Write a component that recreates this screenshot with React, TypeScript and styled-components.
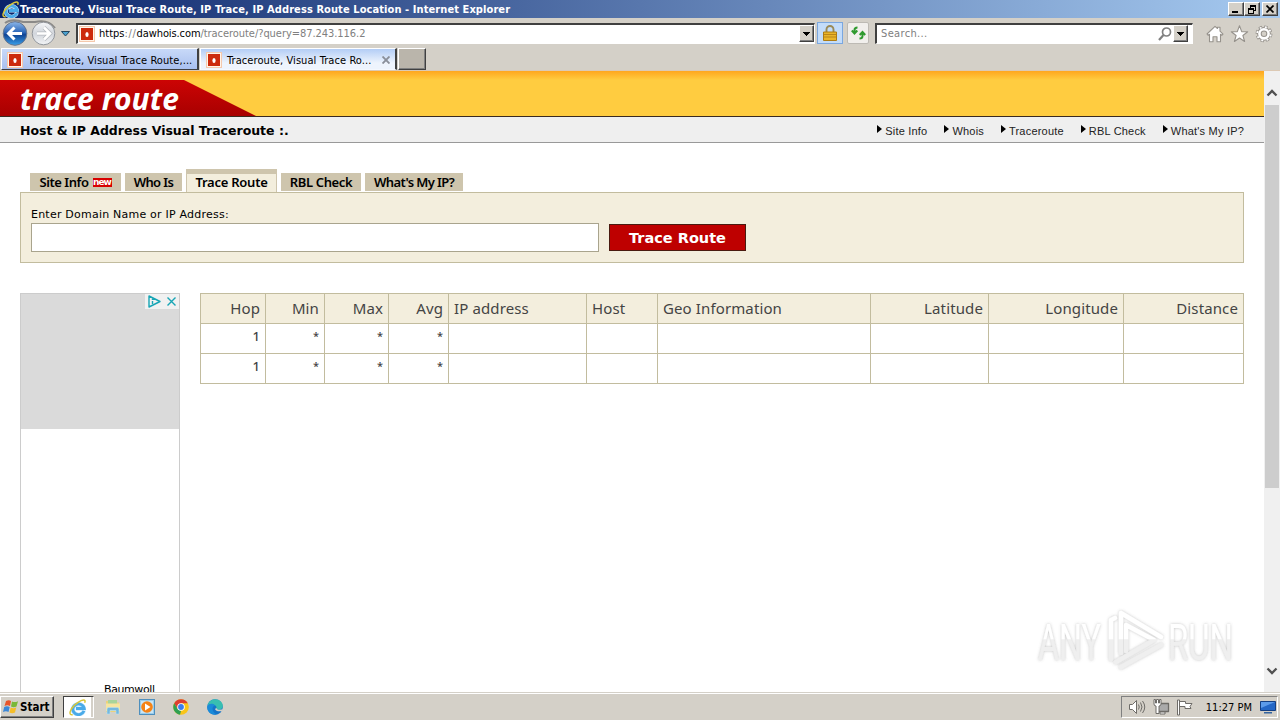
import type { ReactNode } from "react";
import styled, { createGlobalStyle, css } from "styled-components";

const face = "#d4d0c8";
const line = "#c2bc9e";
const cream = "#f3eedd";
const tahoma = `"DejaVu Sans Condensed", "DejaVu Sans", sans-serif`;
const verdana = `"DejaVu Sans", sans-serif`;
const trebuchet = `"Noto Sans", sans-serif`;

const GlobalStyle = createGlobalStyle`
  * {
    box-sizing: border-box;
  }
  body {
    margin: 0;
    overflow: hidden;
    background: #fff;
  }
`;

const raised = css`
  border: 1px solid;
  border-color: #fff #404040 #404040 #fff;
  box-shadow: inset -1px -1px 0 #808080;
`;

const Screen = styled.div`
  width: 1280px;
  height: 720px;
  display: flex;
  flex-direction: column;
  overflow: hidden;
  font: 11px ${tahoma};
  color: #000;
  white-space: nowrap;
  svg {
    display: block;
    flex-shrink: 0;
  }
`;

const Label = styled.span<{ $ls?: number }>`
  letter-spacing: ${(p) => p.$ls ?? 0}px;
`;

/* browser window */

const TitleBar = styled.div`
  height: 18px;
  display: flex;
  align-items: center;
  padding: 0 2px;
  background: linear-gradient(90deg, #0a246a, #a6caf0);
  color: #fff;
  font-weight: bold;
`;

const Caption = styled(Label)`
  margin-left: 1px;
  flex: 1;
`;

const WinButton = styled.div<{ $gap?: number }>`
  ${raised}
  width: 16px;
  height: 14px;
  margin-left: ${(p) => p.$gap ?? 0}px;
  background: ${face};
  display: flex;
  align-items: center;
  justify-content: center;
`;

const Toolbar = styled.div`
  height: 30px;
  display: flex;
  align-items: center;
  padding-left: 2px;
  background: ${face};
`;

const Field = styled.div<{ $w: number }>`
  width: ${(p) => p.$w}px;
  height: 21px;
  display: flex;
  align-items: center;
  border: 1px solid;
  border-color: #404040 #fff #fff #404040;
  border-width: 2px 1px 1px 2px;
  background: #fff;
  color: #808080;
`;

const Host = styled(Label)`
  color: #000;
`;

const DropButton = styled.div`
  ${raised}
  width: 15px;
  height: 17px;
  background: ${face};
  display: flex;
  align-items: center;
  justify-content: center;
`;

const ToolButton = styled.div<{ $active?: boolean }>`
  width: ${(p) => (p.$active ? 26 : 22)}px;
  height: 22px;
  border: 1px solid ${(p) => (p.$active ? "#7aa7e0" : "#bdbab4")};
  border-radius: ${(p) => (p.$active ? 0 : 2)}px;
  background: ${(p) => (p.$active ? "#c3dcfa" : "#f1efec")};
  display: flex;
  align-items: center;
  justify-content: center;
`;

const TabStrip = styled.div`
  height: 23px;
  display: flex;
  padding-left: 1px;
  background: ${face};
  border-bottom: 1px solid #dcc9b4;
`;

const BrowserTab = styled.div<{ $active?: boolean }>`
  width: ${(p) => (p.$active ? 197 : 198)}px;
  height: 22px;
  margin-right: 1px;
  padding: 2px 5px 0 5px;
  display: flex;
  align-items: center;
  gap: 5px;
  border: solid;
  border-width: 1px 2px 1px 1px;
  border-color: #fff #404040 ${(p) => (p.$active ? "#f4f8fe" : "#404040")} #fff;
  background: ${(p) =>
    p.$active
      ? "linear-gradient(#b3cdf6, #eef4fd 70%)"
      : "linear-gradient(#c8d9f8, #a9c0ef)"};
`;

const NewTab = styled.div`
  ${raised}
  width: 28px;
  height: 22px;
  background: #bab5ab;
`;

const Spacer = styled.div<{ $w?: number }>`
  ${(p) => (p.$w ? `width: ${p.$w}px;` : "flex: 1;")}
`;

/* site */

const Viewport = styled.div`
  height: 621px;
  display: flex;
  position: relative;
`;

const Page = styled.div`
  width: 1264px;
  overflow: hidden;
  background: #fff;
`;

const Banner = styled.div`
  height: 46px;
  padding-top: 9px;
  background: linear-gradient(#ffa61e, #ffcc40 9px);
  border-bottom: 1px solid #3a2a20;
`;

const Brand = styled.div`
  width: 256px;
  height: 36px;
  padding-left: 20px;
  background: linear-gradient(#cc0404, #a80000);
  clip-path: polygon(0 0, 184px 0, 256px 36px, 0 36px);
  color: #fff;
  font: italic bold 30px/37px ${trebuchet};
  letter-spacing: 0.1px;
`;

const SubHeader = styled.div`
  height: 26px;
  display: flex;
  align-items: center;
  justify-content: space-between;
  padding: 1px 20px 0;
  background: #efefef;
  border-bottom: 1px solid #999;
  font: bold 12.5px ${verdana};
`;

const Links = styled.nav`
  display: flex;
  gap: 17px;
`;

const NavLink = styled.span`
  display: flex;
  align-items: center;
  gap: 3px;
  font: 11px "Liberation Sans", sans-serif;
  letter-spacing: 0.2px;
  color: #222;
  padding-top: 2px;
  &::before {
    content: "";
    border: 4px solid transparent;
    border-left: 5px solid #000;
    border-right: 0;
    margin-top: -4px;
  }
`;

const Content = styled.main`
  padding: 26px 20px 0;
`;

const SiteTabs = styled.div`
  height: 23px;
  display: flex;
  align-items: flex-end;
  gap: 4px;
  padding-left: 10px;
`;

const SiteTab = styled.div<{ $w: number; $active?: boolean }>`
  width: ${(p) => p.$w}px;
  height: ${(p) => (p.$active ? 23 : 18)}px;
  margin-bottom: ${(p) => (p.$active ? 0 : 1)}px;
  display: flex;
  align-items: center;
  justify-content: center;
  gap: 4px;
  font: 600 13px/18px ${trebuchet};
  background: ${(p) => (p.$active ? cream : "#cec5ad")};
  ${(p) =>
    p.$active &&
    css`
      padding-bottom: 2px;
      border: 1px solid #cec5ad;
      border-top-width: 5px;
      border-bottom: 0;
    `}
`;

const NewBadge = styled.span`
  width: 19px;
  height: 9px;
  background: #d80000;
  color: #fff;
  font: bold 9px/8px ${verdana};
  letter-spacing: -1px;
  text-align: center;
`;

const SearchPanel = styled.div`
  height: 71px;
  padding: 14px 10px 0;
  border: 1px solid ${line};
  background: ${cream};
  font: 11px/15px ${verdana};
`;

const SearchRow = styled.div`
  display: flex;
  align-items: center;
  gap: 10px;
  margin-top: 1px;
`;

const QueryInput = styled.input`
  width: 568px;
  height: 29px;
  border: 1px solid #a9a48d;
  background: #fff;
`;

const SubmitButton = styled.button`
  width: 137px;
  height: 27px;
  padding: 0;
  border: 1px solid #4a1a10;
  background: #be0000;
  color: #fff;
  font: bold 14.5px ${verdana};
`;

const Columns = styled.div`
  display: flex;
  align-items: flex-start;
  gap: 20px;
  margin-top: 30px;
`;

const AdSlot = styled.aside`
  width: 160px;
  height: 420px;
  border: 1px solid #ccc;
  font: 11px/14px ${verdana};
`;

const AdImage = styled.div`
  height: 135px;
  display: flex;
  justify-content: flex-end;
  align-items: flex-start;
  background: #dadada;
`;

const AdText = styled.div`
  padding: 254px 0 0 83px;
  letter-spacing: -0.4px;
`;

const HopTable = styled.table`
  width: 1044px;
  table-layout: fixed;
  border-collapse: collapse;
  color: #444;
`;

const HeadCell = styled.th<{ $left?: boolean }>`
  height: 30px;
  padding: 0 5px 1px;
  border: 1px solid ${line};
  background: ${cream};
  text-align: ${(p) => (p.$left ? "left" : "right")};
  font: 15px/18px ${trebuchet};
  letter-spacing: 0.12px;
`;

const Cell = styled.td<{ $mark?: boolean }>`
  height: 30px;
  padding: 3px 5px 0;
  border: 1px solid ${line};
  text-align: right;
  vertical-align: top;
  font: 500 ${(p) => (p.$mark ? 11 : 13)}px/18px ${trebuchet};
`;

const Scrollbar = styled.div`
  width: 16px;
  padding: 18px 1px 17px;
  display: flex;
  flex-direction: column;
  align-items: center;
  background: #f0f0f0;
`;

const Thumb = styled.div`
  width: 14px;
  height: 383px;
  margin: 8px 0 auto;
  background: #cdcdcd;
`;

const Watermark = styled.div`
  position: absolute;
  left: 1034px;
  top: 534px;
`;

/* taskbar */

const Taskbar = styled.div`
  height: 28px;
  padding: 2px 2px 1px 0;
  display: flex;
  align-items: center;
  background: ${face};
  border-top: 1px solid #d4d0c8;
  box-shadow: inset 0 1px 0 #fff;
`;

const StartButton = styled.div`
  ${raised}
  width: 54px;
  height: 22px;
  display: flex;
  align-items: center;
  gap: 1px;
  padding-left: 2px;
  font: bold 11.5px ${tahoma};
`;

const ActiveTask = styled.div`
  width: 31px;
  height: 22px;
  margin: 0 11px 0 9px;
  padding-right: 2px;
  display: flex;
  align-items: center;
  justify-content: center;
  border: 1px solid;
  border-color: #404040 #fff #fff #404040;
  box-shadow: inset -2px 0 0 #d4d0c8;
  background: #fff;
`;

const QuickLaunch = styled.div`
  display: flex;
  gap: 18px;
`;

const Tray = styled.div`
  width: 157px;
  height: 22px;
  display: flex;
  align-items: center;
  padding: 0 1px 0 6px;
  border: 1px solid;
  border-color: #808080 #fff #fff #808080;
`;

function IeIcon({ size = 16 }: { size?: number }) {
  return (
    <svg width={size} height={size} viewBox="0 0 16 16" fill="none">
      <path
        d="M14.100 11.200A5.400 5 0 1 1 14.300 8.900H6.500"
        stroke="#bfe4fb"
        strokeWidth="3.700"
      />
      <path
        d="M14.100 11.200A5.400 5 0 1 1 14.300 8.900H6.500"
        stroke="#4aaae8"
        strokeWidth="2.700"
      />
      <path
        d="M3.500 14.800C-1 15.500 1 9.500 5.500 5.500 9.500 2 14-.2 15 1.500q.3.800-.3 2"
        stroke="#d9c63a"
        strokeWidth="1.400"
      />
    </svg>
  );
}

function SiteIcon() {
  return (
    <svg width="16" height="16" viewBox="0 0 16 16">
      <rect width="16" height="16" fill="#f4c9ad" />
      <rect x="1" y="1" width="14" height="14" fill="#fff4e8" />
      <rect x="2" y="2" width="12" height="12" fill="#cc2a0c" />
      <ellipse cx="8" cy="8.5" rx="1.6" ry="2.5" fill="#fff" />
    </svg>
  );
}

function NavButtons() {
  return (
    <svg width="70" height="28" viewBox="0 0 70 28">
      <defs>
        <linearGradient id="back" x2="0" y2="1">
          <stop offset="0" stopColor="#8db7ea" />
          <stop offset=".45" stopColor="#2c67b8" />
          <stop offset=".55" stopColor="#104494" />
          <stop offset="1" stopColor="#39a0ea" />
        </linearGradient>
        <linearGradient id="fwd" x2="0" y2="1">
          <stop offset="0" stopColor="#f6f7f9" />
          <stop offset=".5" stopColor="#d2d6dc" />
          <stop offset="1" stopColor="#f2f4f6" />
        </linearGradient>
      </defs>
      <path d="M3 4C8 0 16 1 21 3H33Q46 0 53 9" stroke="#8b8a88" strokeWidth="2" fill="none" />
      <circle cx="13" cy="14.5" r="11.8" fill="url(#back)" stroke="#64738c" />
      <path d="M20 14.5H7M12.5 8.5l-6 6 6 6" stroke="#fff" strokeWidth="3" fill="none" />
      <circle cx="41.5" cy="14.5" r="11.3" fill="url(#fwd)" stroke="#92969c" />
      <path d="M35 14.5h12M42 8.5l6 6-6 6" stroke="#b4b8bd" strokeWidth="4" fill="none" />
      <path d="M35 14.5h12M42 8.5l6 6-6 6" stroke="#fff" strokeWidth="2.6" fill="none" />
      <path d="M59.5 12.5h8l-4 4.5z" fill="#4ba2d0" stroke="#24465e" />
    </svg>
  );
}

function DownArrow() {
  return (
    <svg width="7" height="4" shapeRendering="crispEdges">
      <path d="M0 0h7L3.5 4z" />
    </svg>
  );
}

function ToolIcons() {
  return (
    <svg width="68" height="20" viewBox="0 0 68 20">
      <g transform="translate(0 .8)">
        <g fill="#fff" stroke="#96928c" strokeWidth="1.1" strokeLinejoin="round">
          <path d="M1 10.2 9 2.5l2.5 2.2V3.5H14v3.8l3 3-1.2 1.2L14.500 10.500V18H11v-5H7v5H3.500v-7.500L2.200 11.500z" />
          <path d="m33.500 2 2.200 5.800 6 .2-4.800 3.700 1.700 6-5.100-3.500-5.100 3.500 1.700-6L25.300 8l6-.2z" />
        </g>
        <circle cx="58" cy="10" r="7" fill="none" stroke="#96928c" strokeWidth="2.800" strokeDasharray="3.300 2.198" />
        <circle cx="58" cy="10" r="4.600" fill="none" stroke="#96928c" strokeWidth="4.600" />
        <circle cx="58" cy="10" r="6.800" fill="none" stroke="#fff" strokeWidth="1.800" strokeDasharray="1.900 3.441" strokeDashoffset="-.7" />
        <circle cx="58" cy="10" r="4.600" fill="none" stroke="#fff" strokeWidth="2.600" />
      </g>
    </svg>
  );
}

function Chevron({ up }: { up?: boolean }) {
  return (
    <svg width="12" height="8" viewBox="0 0 12 8">
      <path
        d={up ? "M1.500 6.500 6 2l4.500 4.500" : "M1.500 1.500 6 6l4.500-4.500"}
        fill="none"
        stroke="#505050"
        strokeWidth="2.300"
      />
    </svg>
  );
}

function AnyRun() {
  return (
    <svg width="202" height="68" viewBox="0 0 202 68" overflow="visible">
      <defs>
        <filter id="soft" x="-10%" y="-10%" width="120%" height="120%">
          <feDropShadow dx="0" dy="0" stdDeviation="1.800" floodColor="#777" floodOpacity=".45" />
        </filter>
        <linearGradient id="mark" gradientUnits="userSpaceOnUse" x1="0" y1="0" x2="0" y2="68">
          <stop offset=".5" stopColor="#fff" />
          <stop offset=".51" stopColor="#efefef" />
        </linearGradient>
      </defs>
      <g filter="url(#soft)" fill="url(#mark)">
        <text x="4" y="55" textLength="63" lengthAdjust="spacingAndGlyphs" fontFamily="Roboto, sans-serif" fontSize="50">
          ANY
        </text>
        <text x="134" y="55" textLength="65" lengthAdjust="spacingAndGlyphs" fontFamily="Roboto, sans-serif" fontSize="50">
          RUN
        </text>
        <g fill="none" stroke="url(#mark)" strokeWidth="4.500" strokeLinejoin="round" strokeLinecap="round">
          <path d="M77 54V15l4-2" />
          <path d="M87 48V8l40 24" />
          <path d="M92 46V20l28 15-38 22" />
          <path d="M127 40 87 62" />
        </g>
      </g>
    </svg>
  );
}

function QuickIcons() {
  return (
    <QuickLaunch>
      <svg width="16" height="16" viewBox="0 0 16 16">
        <path d="M1 2h5l1 1.500h7V13H1z" fill="#ecd27a" />
        <path d="M3 1h9v5H3z" fill="#a8d49a" />
        <path d="M1 4.500h14V12H1z" fill="#f6e5a0" />
        <path d="M2 15V10q0-1.500 1.500-1.500h9Q14 8.500 14 10v5h-3v-3.500H5V15z" fill="#75b8de" stroke="#b8e0f2" strokeWidth=".6" />
      </svg>
      <svg width="16" height="16" viewBox="0 0 16 16">
        <rect x=".5" y=".5" width="15" height="15" fill="#9acdec" stroke="#4e8fbd" />
        <rect x="2" y="2" width="12" height="12" fill="#c9e5f5" />
        <circle cx="8" cy="8" r="5.800" fill="#f58316" />
        <path d="m6 4.500 5.500 3.500L6 11.500z" fill="#fff" />
      </svg>
      <svg width="16" height="16" viewBox="0 0 16 16">
        <circle cx="8" cy="8" r="7.800" fill="#f9c518" />
        <path d="M8 8 4.700 10 1.200 4.200A7.800 7.800 0 0 1 14.800 4.200H8z" fill="#dd3e31" />
        <path d="M1.200 4.200 4.700 10 8 12l-1 3.700A7.800 7.800 0 0 1 1.200 4.200z" fill="#2fa052" />
        <circle cx="8" cy="8" r="3.800" fill="#fff" />
        <circle cx="8" cy="8" r="2.900" fill="#3b7ded" />
      </svg>
      <svg width="16" height="16" viewBox="0 0 16 16">
        <circle cx="8" cy="8" r="7.800" fill="#1574c8" />
        <path d="M.5 6.500C1.500 2.500 4.500.2 8 .2c4.800 0 8 3.500 7.800 6.800-.1 2.500-2 3.700-4 3.700-2.300 0-2.800-1-2.200-2C9.500 5.500 4 4 .5 6.500z" fill="#38bfb1" />
        <path d="M8 10q1 3 7 2.200L16 9.700q-1.500 1.300-4.500 1-2.500-.4-1.900-2z" fill="#d4d0c8" />
        <path d="M.3 8C1 4 6.500 4 8 6.500 4 7.500 5 13.500 10 15.500 4 16.500 0 12.500.3 8z" fill="#1a8bd9" />
      </svg>
    </QuickLaunch>
  );
}

function TrayIcons() {
  return (
    <svg width="68" height="18" viewBox="0 0 68 18">
      <g fill="#fff" stroke="#6e6c68" strokeLinejoin="round">
        <path d="M1.500 6.500h3l4-4v13l-4-4h-3z" />
        <path d="M10.500 6.500q1.500 2.500 0 5M12.500 4.500q3 4.500 0 9M14.500 3q4.500 6 0 12" fill="none" />
        <path d="M29.500 5.500h11v8h-11z" fill="#aaa" strokeWidth="1.300" />
        <path d="M33 14h4v2h-5v-2zM26 1.500V6q0 2 2 2v7.500h3V8q2 0 2-2V1.500h-1.500V5h-1V1.500h-2V5h-1V1.500z" />
        <path d="M49.500 2v15h2V2zM51.500 3.500h6v2H64l-2 3 1 2h-6v-2h-5.500z" />
      </g>
    </svg>
  );
}

function PageTab({ width, children, active }: { width: number; children: ReactNode; active?: boolean }) {
  return (
    <SiteTab $w={width} $active={active}>
      {children}
    </SiteTab>
  );
}

const links = ["Site Info", "Whois", "Traceroute", "RBL Check", "What's My IP?"];

const columns = [
  { label: "Hop", width: 65 },
  { label: "Min", width: 59 },
  { label: "Max", width: 64 },
  { label: "Avg", width: 60 },
  { label: "IP address", width: 138, left: true },
  { label: "Host", width: 71, left: true },
  { label: "Geo Information", width: 213, left: true },
  { label: "Latitude", width: 118 },
  { label: "Longitude", width: 135 },
  { label: "Distance", width: 120 },
];

const hops = [
  ["1", "*", "*", "*", "", "", "", "", "", ""],
  ["1", "*", "*", "*", "", "", "", "", "", ""],
];

export default function App() {
  return (
    <Screen>
      <GlobalStyle />
      <TitleBar>
        <IeIcon size={17} />
        <Caption $ls={0.085}>
          Traceroute, Visual Trace Route, IP Trace, IP Address Route Location - Internet Explorer
        </Caption>
        <WinButton>
          <svg width="8" height="8"><path d="M0 6h6v2H0z" /></svg>
        </WinButton>
        <WinButton>
          <svg width="9" height="9" fill="none" stroke="#000" shapeRendering="crispEdges">
            <path d="M2.500 3V.5h5v5H6M2 1.500h6M.5 3.500h5v5h-5zM0 4.500h6" />
          </svg>
        </WinButton>
        <WinButton $gap={2}>
          <svg width="8" height="8"><path d="m.5.5 7 7m0-7-7 7" stroke="#000" strokeWidth="1.700" /></svg>
        </WinButton>
      </TitleBar>
      <Toolbar>
        <NavButtons />
        <Spacer $w={4} />
        <Field $w={739}>
          <Spacer $w={1} />
          <SiteIcon />
          <Spacer $w={4} />
          <Label $ls={-0.05}>
            <Host>https</Host>
            <Label $ls={0.7}>://</Label>
            <Host $ls={-0.1}>dawhois.com</Host>/traceroute/?query=87.243.116.2
          </Label>
          <Spacer />
          <DropButton><DownArrow /></DropButton>
        </Field>
        <Spacer $w={2} />
        <ToolButton $active>
          <svg width="14" height="16" viewBox="0 0 14 16">
            <path d="M3.500 8V4.500a3.500 3.500 0 0 1 7 0V8" fill="none" stroke="#9a8a58" strokeWidth="1.900" />
            <path d="M.5 7h13v8.500H.5z" fill="#e9b52b" stroke="#ad7c14" />
            <path d="M1 9.500h12M1 12h12" stroke="#b9851b" />
          </svg>
        </ToolButton>
        <Spacer $w={4} />
        <ToolButton>
          <svg width="15" height="14" viewBox="0 0 15 14" fill="none" stroke="#2f9a2f" strokeWidth="2">
            <path d="M6.500 1.500Q3.500 1.500 3.500 4v3M.8 4.500l2.700 3 2.800-3" />
            <path d="M8.500 12.500q3 0 3-2.500V7M8.700 9l2.800-3 2.700 3" />
          </svg>
        </ToolButton>
        <Spacer $w={6} />
        <Field $w={318}>
          <Spacer $w={4} />
          <Label $ls={0.35}>Search...</Label>
          <Spacer />
          <svg width="14" height="14" viewBox="0 0 14 14" fill="none" stroke="#808080">
            <circle cx="8.500" cy="5" r="4" strokeWidth="1.700" />
            <path d="M5.500 8 1 13" strokeWidth="2.200" />
          </svg>
          <Spacer $w={1} />
          <DropButton><DownArrow /></DropButton>
          <Spacer $w={4} />
        </Field>
        <Spacer $w={13} />
        <ToolIcons />
      </Toolbar>
      <TabStrip>
        <BrowserTab>
          <SiteIcon />
          <Label $ls={0.08}>Traceroute, Visual Trace Route,...</Label>
        </BrowserTab>
        <BrowserTab $active>
          <SiteIcon />
          <Label $ls={0.08}>Traceroute, Visual Trace Ro...</Label>
          <Spacer />
          <svg width="8" height="8"><path d="m.5.5 7 7m0-7-7 7" stroke="#8a8f9a" strokeWidth="1.900" /></svg>
        </BrowserTab>
        <NewTab />
      </TabStrip>
      <Viewport>
        <Page>
          <Banner>
            <Brand>trace route</Brand>
          </Banner>
          <SubHeader>
            <Label>Host &amp; IP Address Visual Traceroute :.</Label>
            <Links>
              {links.map((l) => (
                <NavLink key={l}>{l}</NavLink>
              ))}
            </Links>
          </SubHeader>
          <Content>
            <SiteTabs>
              <PageTab width={91}>
                <Label $ls={-0.45}>Site Info</Label>
                <NewBadge>new</NewBadge>
              </PageTab>
              <PageTab width={57}><Label $ls={-0.6}>Who Is</Label></PageTab>
              <PageTab width={91} active><Label $ls={-0.25}>Trace Route</Label></PageTab>
              <PageTab width={80}><Label $ls={-0.35}>RBL Check</Label></PageTab>
              <PageTab width={98}><Label $ls={-0.6}>What's My IP?</Label></PageTab>
            </SiteTabs>
            <SearchPanel>
              <Label $ls={0.22}>Enter Domain Name or IP Address:</Label>
              <SearchRow>
                <QueryInput />
                <SubmitButton>Trace Route</SubmitButton>
              </SearchRow>
            </SearchPanel>
            <Columns>
              <AdSlot>
                <AdImage>
                  <svg width="34" height="15" viewBox="0 0 34 15" fill="none" stroke="#18a5b5">
                    <path d="M0 0h34v15H0z" fill="#f1f1f1" stroke="none" />
                    <path d="M4 2v11l11-5.500zM7.500 7v3M7.500 4.700v1.200" strokeWidth="1.400" strokeLinejoin="round" />
                    <path d="m22.500 3.500 8 8m0-8-8 8" strokeWidth="1.400" />
                  </svg>
                </AdImage>
                <AdText>Baumwoll</AdText>
              </AdSlot>
              <HopTable>
                <colgroup>
                  {columns.map((c) => (
                    <col key={c.label} style={{ width: c.width }} />
                  ))}
                </colgroup>
                <tbody>
                  <tr>
                    {columns.map((c) => (
                      <HeadCell key={c.label} $left={c.left}>{c.label}</HeadCell>
                    ))}
                  </tr>
                  {hops.map((row, k) => (
                    <tr key={k}>
                      {row.map((v, i) => (
                        <Cell key={i} $mark={v === "*"}>{v}</Cell>
                      ))}
                    </tr>
                  ))}
                </tbody>
              </HopTable>
            </Columns>
          </Content>
        </Page>
        <Scrollbar>
          <Chevron up />
          <Thumb />
          <Chevron />
        </Scrollbar>
        <Watermark>
          <AnyRun />
        </Watermark>
      </Viewport>
      <Taskbar>
        <StartButton>
          <svg width="16" height="16" viewBox="0 0 16 16">
            <path d="M3 2q3-1.500 5 0L7 7Q4.500 5.500 1.500 7z" fill="#e8542a" />
            <path d="M9 2.500q2.500 1.300 6-.3L13.500 7.500q-3 1.300-5.500 0z" fill="#79b83a" />
            <path d="M1.200 8Q4 6.500 6.700 8L5.500 13q-2.500-1.500-5.500 0z" fill="#3b87d8" />
            <path d="M7.700 8.500q2.500 1.300 5.500 0L12 13.500q-3 1.300-5.500 0z" fill="#f5bd28" />
          </svg>
          Start
        </StartButton>
        <ActiveTask>
          <IeIcon size={17} />
        </ActiveTask>
        <QuickIcons />
        <Spacer />
        <Tray>
          <TrayIcons />
          <Spacer />
          <Label>11:27 PM</Label>
          <Spacer $w={8} />
          <svg width="16" height="14" viewBox="0 0 16 14">
            <path d="M.5 1.500h15v9H.5z" fill="#2467c6" stroke="#143f83" />
            <path d="M1 2h14L1 8z" fill="#5c9bea" />
            <path d="M4 12h8v1.500H4z" fill="#33639e" />
          </svg>
        </Tray>
      </Taskbar>
    </Screen>
  );
}
